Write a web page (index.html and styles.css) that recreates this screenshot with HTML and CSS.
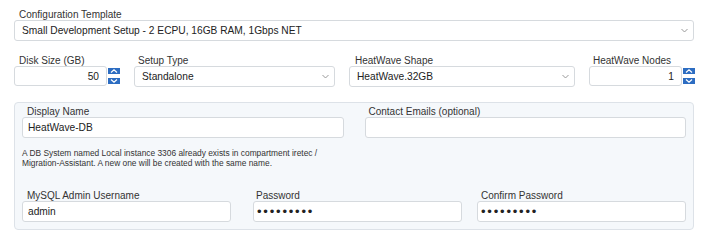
FILE: index.html
```html
<!DOCTYPE html>
<html lang="en">
<head>
    <meta charset="UTF-8">
    <title>HeatWave DB System</title>
    <link rel="stylesheet" href="styles.css">
</head>
<body>
    <div class="form">
        <!-- Template -->
        <div class="field">
            <label>Configuration Template</label>
            <div class="select-wrap">
                <select>
                    <option>Small Development Setup - 2 ECPU, 16GB RAM, 1Gbps NET</option>
                </select>
                <svg class="chevron" width="7" height="5" viewBox="0 0 7 5"><polyline points="0.5,1 3.5,4 6.5,1" /></svg>
            </div>
        </div>

        <div class="row-shape">
            <div class="field">
                <label>Disk Size (GB)</label>
                <div class="number-wrap">
                    <input type="text" class="number" value="50">
                    <div class="spinner">
                        <button class="spin"><svg width="8" height="4" viewBox="0 0 8 4"><polyline points="1,3.5 4,0.8 7,3.5" /></svg></button>
                        <button class="spin"><svg width="8" height="4" viewBox="0 0 8 4"><polyline points="1,0.5 4,3.2 7,0.5" /></svg></button>
                    </div>
                </div>
            </div>
            <div class="field">
                <label>Setup Type</label>
                <div class="select-wrap">
                    <select><option>Standalone</option></select>
                    <svg class="chevron" width="7" height="5" viewBox="0 0 7 5"><polyline points="0.5,1 3.5,4 6.5,1" /></svg>
                </div>
            </div>
            <div class="field">
                <label class="shape-label">HeatWave Shape</label>
                <div class="select-wrap">
                    <select><option>HeatWave.32GB</option></select>
                    <svg class="chevron" width="7" height="5" viewBox="0 0 7 5"><polyline points="0.5,1 3.5,4 6.5,1" /></svg>
                </div>
            </div>
            <div class="field">
                <label>HeatWave Nodes</label>
                <div class="number-wrap">
                    <input type="text" class="number" value="1">
                    <div class="spinner">
                        <button class="spin"><svg width="8" height="4" viewBox="0 0 8 4"><polyline points="1,3.5 4,0.8 7,3.5" /></svg></button>
                        <button class="spin"><svg width="8" height="4" viewBox="0 0 8 4"><polyline points="1,0.5 4,3.2 7,0.5" /></svg></button>
                    </div>
                </div>
            </div>
        </div>

        <!-- DB system details -->
        <div class="panel">
            <div class="row-names">
                <div class="field">
                    <label>Display Name</label>
                    <input type="text" value="HeatWave-DB">
                </div>
                <div class="field">
                    <label>Contact Emails (optional)</label>
                    <input type="text" value="">
                </div>
            </div>
            <p class="hint">A DB System named Local instance 3306 already exists in compartment iretec /<br>Migration-Assistant. A new one will be created with the same name.</p>
            <div class="row-admin">
                <div class="field">
                    <label>MySQL Admin Username</label>
                    <input type="text" value="admin">
                </div>
                <div class="field">
                    <label class="pw-label">Password</label>
                    <input type="password" class="secret" value="secret123">
                </div>
                <div class="field">
                    <label>Confirm Password</label>
                    <input type="password" class="secret" value="secret123">
                </div>
            </div>
        </div>
    </div>
</body>
</html>
```

FILE: styles.css
```css
body {
    font-family: "Liberation Sans", Arial, sans-serif;
    background-color: #ffffff;
    color: #2b2b2b;
    margin: 0;
    padding: 0;
}

.form {
    width: 680px;
    padding: 9px 0 0 14px;
}

.field label {
    display: block;
    font-size: 10px;
    line-height: 11px;
    padding-left: 5px;
    color: #333;
}

input,
select {
    box-sizing: border-box;
    width: 100%;
    height: 21px;
    border: 1px solid #d6dade;
    border-radius: 3px;
    background: #fff;
    font-family: inherit;
    font-size: 10.2px;
    color: #222;
    padding: 0 7px;
    margin: 0;
    outline: none;
}

select {
    appearance: none;
    -webkit-appearance: none;
}

.select-wrap {
    position: relative;
}

.chevron {
    position: absolute;
    right: 6px;
    top: 8px;
    fill: none;
    stroke: #999;
    stroke-width: 1;
}

.row-shape {
    display: grid;
    grid-template-columns: 106px 201px 226px 105px;
    column-gap: 14px;
    margin-top: 14px;
}

.row-shape .field:nth-child(2) label,
.row-shape .field:nth-child(4) label {
    padding-left: 4px;
}

.shape-label {
    padding-left: 6px !important;
}

.number-wrap {
    display: flex;
    gap: 1px;
}

.number {
    width: 93px;
    text-align: right;
    height: 20px;
}

.spinner {
    display: flex;
    flex-direction: column;
    gap: 4px;
    padding-top: 2px;
}

.spin {
    width: 12px;
    height: 6px;
    padding: 0;
    border: none;
    background-color: #2d6dc2;
    display: flex;
    align-items: center;
    justify-content: center;
}

.spin svg {
    fill: none;
    stroke: #ffffff;
    stroke-width: 1.2;
}

.panel {
    margin-top: 15px;
    border: 1px solid #dde2e8;
    border-radius: 4px;
    background-color: #f5f8fb;
    padding: 3px 7px 7px 7px;
}

.panel input {
    padding: 0 5px;
}

.row-names {
    display: grid;
    grid-template-columns: 1fr 1fr;
    column-gap: 21px;
}

.row-names .field:nth-child(2) label {
    padding-left: 4px;
}

.hint {
    font-size: 8.4px;
    line-height: 10px;
    margin: 10px 0 0 0;
    color: #333;
}

.row-admin {
    display: grid;
    grid-template-columns: 231px 224px 1fr;
    margin-top: 22px;
}

.row-admin input {
    width: 209px;
}

.row-admin .field:nth-child(2) label {
    padding-left: 3px;
}

.row-admin .field:nth-child(3) label {
    padding-left: 4px;
}

.panel .secret {
    font-size: 13px;
    letter-spacing: 1.8px;
    padding-left: 3px;
}
```
